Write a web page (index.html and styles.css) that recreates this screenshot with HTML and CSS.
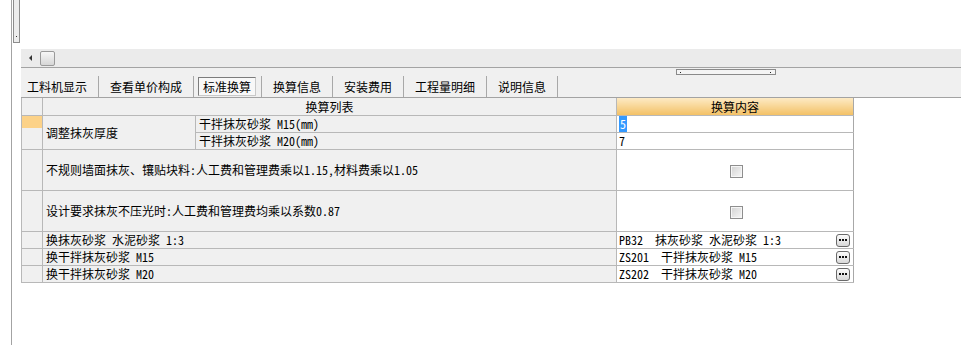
FILE: index.html
```html
<!DOCTYPE html>
<html lang="zh-CN">
<head>
    <meta charset="UTF-8">
    <title>标准换算</title>
    <link rel="stylesheet" href="styles.css">
</head>
<body>
    <div class="window">
        <div class="gutter"></div>
        <div class="vscroll">
            <div class="vthumb"><span class="grip"></span></div>
        </div>
        <div class="main">
            <div class="pane-top"></div>
            <div class="hscroll">
                <span class="arrow-left"></span>
                <span class="hthumb"></span>
            </div>
            <div class="tabbar">
                <span class="splitter"></span>
                <div class="tab first">工料机显示</div>
                <div class="tab">查看单价构成</div>
                <div class="tab active"><span class="tab-box">标准换算</span></div>
                <div class="tab">换算信息</div>
                <div class="tab">安装费用</div>
                <div class="tab">工程量明细</div>
                <div class="tab">说明信息</div>
            </div>
            <table class="grid">
                <colgroup>
                    <col class="c-ind">
                    <col class="c-name">
                    <col class="c-sub">
                    <col class="c-val">
                </colgroup>
                <tr class="head">
                    <td class="ind"></td>
                    <td colspan="2" class="center">换算列表</td>
                    <td class="center head-val">换算内容</td>
                </tr>
                <tr class="row">
                    <td class="ind" rowspan="2"><span class="ind-mark"></span></td>
                    <td rowspan="2">调整抹灰厚度</td>
                    <td>干拌抹灰砂浆 M15(mm)</td>
                    <td class="val"><span class="sel">5</span></td>
                </tr>
                <tr class="row">
                    <td>干拌抹灰砂浆 M20(mm)</td>
                    <td class="val">7</td>
                </tr>
                <tr class="row tall">
                    <td class="ind"></td>
                    <td colspan="2">不规则墙面抹灰、镶贴块料:人工费和管理费乘以1.15,材料费乘以1.05</td>
                    <td class="val center"><span class="check"></span></td>
                </tr>
                <tr class="row tall">
                    <td class="ind"></td>
                    <td colspan="2">设计要求抹灰不压光时:人工费和管理费均乘以系数0.87</td>
                    <td class="val center"><span class="check"></span></td>
                </tr>
                <tr class="row">
                    <td class="ind"></td>
                    <td colspan="2">换抹灰砂浆 水泥砂浆 1:3</td>
                    <td class="val"><div class="pick"><span>PB32  抹灰砂浆 水泥砂浆 1:3</span><span class="more"><i></i><i></i><i></i></span></div></td>
                </tr>
                <tr class="row">
                    <td class="ind"></td>
                    <td colspan="2">换干拌抹灰砂浆 M15</td>
                    <td class="val"><div class="pick"><span>ZS201  干拌抹灰砂浆 M15</span><span class="more"><i></i><i></i><i></i></span></div></td>
                </tr>
                <tr class="row">
                    <td class="ind"></td>
                    <td colspan="2">换干拌抹灰砂浆 M20</td>
                    <td class="val"><div class="pick"><span>ZS202  干拌抹灰砂浆 M20</span><span class="more"><i></i><i></i><i></i></span></div></td>
                </tr>
            </table>
        </div>
    </div>
</body>
</html>
```

FILE: styles.css
```css
body {
    margin: 0;
    background: #ffffff;
    color: #000;
    font-family: "Noto Sans Mono CJK SC", "Noto Sans CJK SC", sans-serif;
    font-size: 12px;
}
.window {
    display: flex;
    height: 345px;
    overflow: hidden;
}
.gutter {
    width: 11px;
    border-right: 1px solid #a3a3a3;
}
.vscroll {
    width: 9px;
}
.vthumb {
    position: relative;
    width: 5px;
    height: 42px;
    margin-left: 1px;
    border: 1px solid #8c8c8c;
    border-top: none;
    background: #ececec;
}
.grip {
    position: absolute;
    left: 2px;
    top: 36px;
    width: 1px;
    height: 1px;
    background: #333;
}
.main {
    flex: 1;
    display: flex;
    flex-direction: column;
}
.pane-top {
    height: 49px;
}
.hscroll {
    height: 18px;
    display: flex;
    align-items: center;
    padding-left: 8px;
    background: #ebebeb;
    border-bottom: 1px solid #a3a3a3;
}
.arrow-left {
    width: 0;
    height: 0;
    border-top: 3px solid transparent;
    border-bottom: 3px solid transparent;
    border-right: 3px solid #333;
}
.hthumb {
    width: 13px;
    height: 13px;
    margin-left: 8px;
    border: 1px solid #9a9a9a;
    border-radius: 2px;
    background: linear-gradient(#f7f7f7, #d6d6d6);
}
.tabbar {
    position: relative;
    display: flex;
    height: 21px;
    padding: 8px 0 0 6px;
    background: #f0f0f0;
    border-bottom: 1px solid #a3a3a3;
}
.splitter {
    position: absolute;
    left: 655px;
    top: 1px;
    width: 98px;
    height: 4px;
    border: 1px solid #8a8a8a;
    background: #f4f4f4;
}
.splitter::before, .splitter::after {
    content: "";
    position: absolute;
    top: 2px;
    width: 1px;
    height: 1px;
    background: #222;
}
.splitter::before { left: 3px; }
.splitter::after { right: 4px; }
.tab {
    height: 21px;
    line-height: 21px;
    padding: 0 11px;
    border-right: 1px solid #a8a8a8;
    white-space: nowrap;
}
.tab.first {
    padding-left: 0;
}
.tab.active {
    padding: 0 5px 0 4px;
}
.tab-box {
    display: block;
    height: 17px;
    margin-top: 1px;
    line-height: 17px;
    padding: 0 4px;
    border: 1px solid;
    border-color: #7c7c7c #c9c9c9 #c9c9c9 #7c7c7c;
    background: #f8f8f8;
}
.grid {
    border-collapse: collapse;
    table-layout: fixed;
    width: 833px;
}
.c-ind { width: 21px; }
.c-name { width: 153px; }
.c-sub { width: 421px; }
.c-val { width: 237px; }
.grid td {
    padding: 0 0 0 3px;
    border: 1px solid #b8b8b8;
    background: #f0f0f0;
    line-height: 14px;
    white-space: pre;
    overflow: hidden;
    vertical-align: middle;
}
.grid .head td {
    height: 17px;
    border-top: none;
}
.grid .row td {
    height: 16px;
}
.grid .row.tall td {
    height: 40px;
}
.grid td.ind {
    padding: 0;
    vertical-align: top;
}
.ind-mark {
    display: block;
    height: 12px;
    background: #fcd288;
}
.grid td.center {
    text-align: center;
    padding: 0;
}
.grid td.head-val {
    background: linear-gradient(#fdeac4, #f3c166);
    border-right-color: #a8a8a8;
}
.grid td.val {
    background: #ffffff;
    padding-left: 2px;
    border-right-color: #a8a8a8;
}
.sel {
    background: #3399ff;
    color: #fff;
    padding: 0 1px;
}
.check {
    display: inline-block;
    width: 11px;
    height: 11px;
    vertical-align: middle;
    border: 1px solid #8e8e8e;
    box-shadow: inset 0 0 0 1px #f6f6f6;
    background: linear-gradient(135deg, #d2d2d2, #f7f7f7);
}
.pick {
    display: flex;
    align-items: center;
    justify-content: space-between;
    padding-right: 3px;
}
.more {
    display: flex;
    align-items: center;
    justify-content: center;
    gap: 1px;
    width: 12px;
    height: 11px;
    border: 1px solid #6a6a6a;
    border-radius: 3px;
    background: linear-gradient(#fbfbfb, #d9d9d9);
}
.more i {
    width: 2px;
    height: 2px;
    background: #111;
}
```
